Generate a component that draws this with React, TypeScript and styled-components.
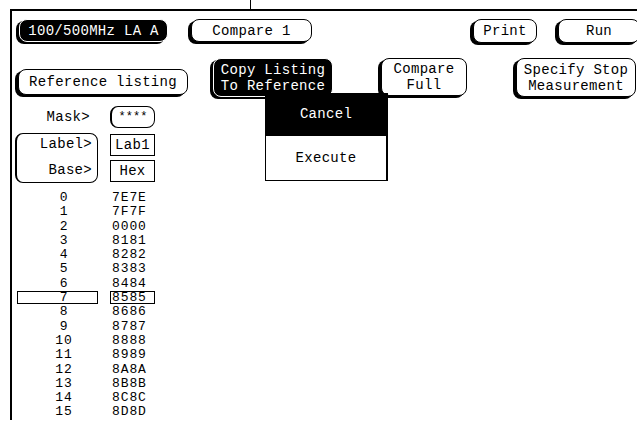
import React from "react";
import styled, { createGlobalStyle } from "styled-components";

const rows: [number, string][] = [
  [0, "7E7E"], [1, "7F7F"], [2, "0000"], [3, "8181"],
  [4, "8282"], [5, "8383"], [6, "8484"], [7, "8585"],
  [8, "8686"], [9, "8787"], [10, "8888"], [11, "8989"],
  [12, "8A8A"], [13, "8B8B"], [14, "8C8C"], [15, "8D8D"],
];

const selectedRow = 7;

export default function App() {
  return (
    <Screen>
      <GlobalStyle />
      <TopStrip>
        <Tick />
      </TopStrip>
      <Frame>
        <KeyRow>
          <Key $dark $w={149} $h={23} $gap={7}>100/500MHz LA A</Key>
          <Key $w={121} $h={23} $gap={23}>Compare 1</Key>
          <Key $w={64} $h={24} $gap={161}>Print</Key>
          <Key $w={82} $h={24} $gap={21}>Run</Key>
        </KeyRow>
        <KeyRow $top={15} $height={40}>
          <Key $w={170} $h={26} $gap={6} $top={11}>Reference listing</Key>
          <MenuAnchor>
            <Key $dark $w={120} $h={39} $gap={25}>
              {"Copy Listing\nTo Reference"}
            </Key>
            <Menu>
              <MenuItem $active>Cancel</MenuItem>
              <MenuItem>Execute</MenuItem>
            </Menu>
          </MenuAnchor>
          <Key $w={86} $h={38} $gap={48}>{"Compare\nFull"}</Key>
          <Key $w={120} $h={39} $gap={49}>{"Specify Stop\nMeasurement"}</Key>
        </KeyRow>

        <Controls>
          <FieldLabel>Mask&gt;</FieldLabel>
          <MaskField>****</MaskField>
          <LabelGroup>
            <GroupLine>Label&gt;</GroupLine>
            <GroupLine>Base&gt;</GroupLine>
          </LabelGroup>
          <ValueStack>
            <ValueField>Lab1</ValueField>
            <ValueField>Hex</ValueField>
          </ValueStack>
        </Controls>

        <Listing>
          {rows.map(([n, v]) => (
            <React.Fragment key={n}>
              <IndexCell $marked={n === selectedRow}>{n}</IndexCell>
              <DataCell $marked={n === selectedRow}>{v}</DataCell>
            </React.Fragment>
          ))}
        </Listing>
      </Frame>
    </Screen>
  );
}

const GlobalStyle = createGlobalStyle`
  html, body {
    margin: 0;
    padding: 0;
    background: #fff;
  }
  body {
    width: 637px;
    height: 422px;
    overflow: hidden;
    color: #000;
    font-family: "Liberation Mono", "DejaVu Sans Mono", monospace;
    font-size: 14px;
  }
`;

const Screen = styled.div`
  width: 637px;
  height: 422px;
  overflow: hidden;
  background: #fff;
`;

const TopStrip = styled.div`
  display: flex;
  height: 9px;
  padding-left: 250px;
`;

const Tick = styled.div`
  width: 1px;
  background: #000;
`;

const Frame = styled.div`
  box-sizing: border-box;
  display: flex;
  flex-direction: column;
  width: 640px;
  height: 411px;
  margin-left: 10px;
  border-top: 2px solid #000;
  border-left: 2px solid #000;
`;

const KeyRow = styled.div<{ $top?: number; $height?: number }>`
  display: flex;
  align-items: flex-start;
  margin-top: ${(p) => p.$top ?? 8}px;
  height: ${(p) => (p.$height ? `${p.$height}px` : "auto")};
`;

const Key = styled.div<{
  $dark?: boolean;
  $w: number;
  $h: number;
  $gap: number;
  $top?: number;
}>`
  flex: 0 0 auto;
  box-sizing: border-box;
  display: flex;
  align-items: center;
  justify-content: center;
  width: ${(p) => p.$w}px;
  height: ${(p) => p.$h}px;
  margin-left: ${(p) => p.$gap}px;
  margin-top: ${(p) => p.$top ?? 0}px;
  border: 1px solid ${(p) => (p.$dark ? "#fff" : "#000")};
  border-radius: 8px;
  background: ${(p) => (p.$dark ? "#000" : "#fff")};
  color: ${(p) => (p.$dark ? "#fff" : "#000")};
  box-shadow: -3px 2px 0 0 #000;
  text-align: center;
  white-space: pre;
  line-height: 16px;
  letter-spacing: 0.3px;
`;

const MenuAnchor = styled.div`
  position: relative;
  display: flex;
`;

const Menu = styled.div`
  position: absolute;
  z-index: 2;
  top: 35px;
  left: 77px;
  width: 123px;
  display: flex;
  flex-direction: column;
`;

const MenuItem = styled.div<{ $active?: boolean }>`
  box-sizing: border-box;
  display: flex;
  align-items: center;
  justify-content: center;
  height: ${(p) => (p.$active ? 43 : 45)}px;
  background: ${(p) => (p.$active ? "#000" : "#fff")};
  color: ${(p) => (p.$active ? "#fff" : "#000")};
  border: 1px solid #000;
  border-top: none;
  border-right-width: 2px;
  letter-spacing: 0.3px;
`;

const Controls = styled.div`
  display: grid;
  grid-template-columns: 83px 45px;
  column-gap: 12px;
  row-gap: 5px;
  margin-top: 8px;
  padding-left: 3px;
`;

const FieldLabel = styled.div`
  height: 22px;
  line-height: 22px;
  text-align: right;
  padding-right: 8px;
  letter-spacing: 0.3px;
`;

const MaskField = styled.div`
  box-sizing: border-box;
  height: 22px;
  line-height: 20px;
  border: 1px solid #000;
  border-left-width: 2px;
  border-radius: 8px;
  text-align: center;
  font-size: 12px;
`;

const LabelGroup = styled.div`
  box-sizing: border-box;
  display: flex;
  flex-direction: column;
  gap: 6px;
  height: 50px;
  padding: 0 5px 0 0;
  border: 1px solid #000;
  border-left-width: 2px;
  border-radius: 8px;
`;

const GroupLine = styled.div`
  height: 20px;
  line-height: 20px;
  text-align: right;
  letter-spacing: 0.3px;
`;

const ValueStack = styled.div`
  display: flex;
  flex-direction: column;
  gap: 4px;
  padding-top: 1px;
`;

const ValueField = styled.div`
  box-sizing: border-box;
  height: 22px;
  line-height: 20px;
  border: 1px solid #000;
  text-align: center;
  letter-spacing: 0.3px;
`;

const Listing = styled.div`
  display: grid;
  grid-template-columns: 81px 45px;
  column-gap: 12px;
  row-gap: 1.3px;
  margin-top: 8px;
  padding-left: 5px;
  font-size: 13px;
`;

const IndexCell = styled.div<{ $marked?: boolean }>`
  box-sizing: border-box;
  height: 13px;
  line-height: 12px;
  padding-left: 13px;
  text-align: center;
  letter-spacing: 0.9px;
  border: 1px solid ${(p) => (p.$marked ? "#000" : "transparent")};
`;

const DataCell = styled.div<{ $marked?: boolean }>`
  box-sizing: border-box;
  height: 13px;
  line-height: 12px;
  padding-left: 1px;
  letter-spacing: 0.9px;
  border: 1px solid ${(p) => (p.$marked ? "#000" : "transparent")};
`;
